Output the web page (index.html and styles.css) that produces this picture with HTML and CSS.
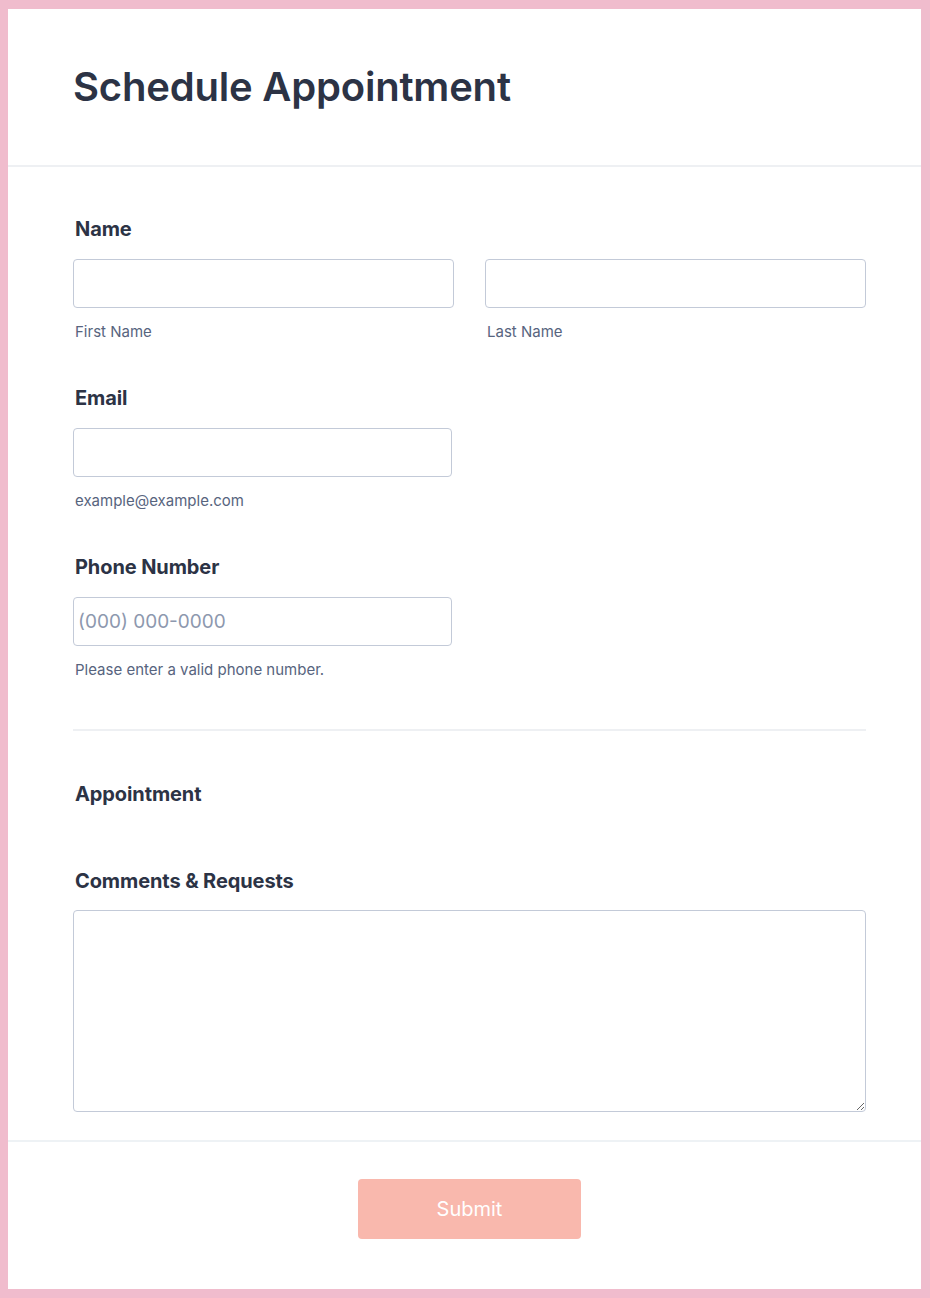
FILE: index.html
```html
<!DOCTYPE html>
<html lang="en">

<head>
    <meta charset="UTF-8">
    <meta name="viewport" content="width=device-width, initial-scale=1.0">
    <title>Schedule Appointment</title>
    <link rel="stylesheet" href="styles.css">
</head>

<body>
    <div class="card">
        <header class="formheader">
            <h1>Schedule Appointment</h1>
        </header>

        <form class="formbody">
            <div class="field">
                <label class="fieldlabel">Name</label>
                <div class="row">
                    <div class="col">
                        <input type="text" class="textbox">
                        <span class="sublabel">First Name</span>
                    </div>
                    <div class="col">
                        <input type="text" class="textbox">
                        <span class="sublabel">Last Name</span>
                    </div>
                </div>
            </div>

            <div class="field">
                <label class="fieldlabel">Email</label>
                <input type="text" class="textbox half">
                <span class="sublabel">example@example.com</span>
            </div>

            <div class="field">
                <label class="fieldlabel">Phone Number</label>
                <input type="text" class="textbox half phone" placeholder="(000) 000-0000">
                <span class="sublabel">Please enter a valid phone number.</span>
            </div>

            <hr class="divider">

            <div class="field appointment">
                <label class="fieldlabel">Appointment</label>
            </div>

            <div class="field comments">
                <label class="fieldlabel">Comments &amp; Requests</label>
                <textarea class="textarea"></textarea>
            </div>
        </form>

        <footer class="formfooter">
            <button class="submit">Submit</button>
        </footer>
    </div>
</body>

</html>
```

FILE: styles.css
```css
body {
    font-family: Inter, "Noto Sans", sans-serif;
    margin: 0;
    padding: 9px 9px 9px 8px;
    background-color: #f0bccd;
}

.card {
    background-color: #fff;
    min-height: 1280px;
    display: flex;
    flex-direction: column;
}

.formheader {
    padding: 54px 55px 54px 65px;
    border-bottom: 2px solid #eef0f3;
}

h1 {
    font-size: 40px;
    font-weight: 600;
    line-height: 48px;
    color: #2c3345;
    margin: 0;
    letter-spacing: -0.2px;
}

.formbody {
    padding: 50px 55px 28px 65px;
    display: flex;
    flex-direction: column;
}

.field {
    display: flex;
    flex-direction: column;
    align-items: flex-start;
    margin-bottom: 45px;
}

.fieldlabel {
    font-size: 20px;
    font-weight: 700;
    line-height: 24px;
    color: #2c3345;
    margin: 0 0 18px 2px;
    letter-spacing: -0.1px;
}

.row {
    display: flex;
    gap: 31px;
    width: 100%;
}

.col {
    flex: 1;
    display: flex;
    flex-direction: column;
}

.textbox {
    width: 100%;
    height: 49px;
    padding: 0 10px;
    border: 1px solid #c3cad8;
    border-radius: 4px;
    box-sizing: border-box;
    font-family: inherit;
    font-size: 19px;
    color: #2c3345;
    background-color: #fff;
}

.half {
    width: 379px;
}

.phone {
    padding-left: 4px;
}

.phone::placeholder {
    color: #8d98ae;
}

.sublabel {
    font-size: 15px;
    line-height: 18px;
    color: #57647e;
    margin: 15px 0 0 2px;
}

.divider {
    border: none;
    border-top: 2px solid #eef0f3;
    margin: 5px 0 51px 0;
    width: 100%;
}

.appointment {
    margin-bottom: 63px;
}

.appointment .fieldlabel {
    margin-bottom: 0;
}

.comments .fieldlabel {
    margin-bottom: 17px;
}

.textarea {
    width: 100%;
    height: 202px;
    border: 1px solid #c3cad8;
    border-radius: 4px;
    box-sizing: border-box;
    font-family: inherit;
    font-size: 16px;
    resize: vertical;
}

.formbody .field:last-child {
    margin-bottom: 0;
}

.formfooter {
    border-top: 2px solid #eef2f5;
    padding: 37px 55px 48px 65px;
    text-align: center;
}

.submit {
    width: 223px;
    height: 60px;
    background-color: #f9b8ad;
    color: #fff;
    font-family: inherit;
    font-size: 20px;
    border: none;
    border-radius: 4px;
    cursor: pointer;
}
```
